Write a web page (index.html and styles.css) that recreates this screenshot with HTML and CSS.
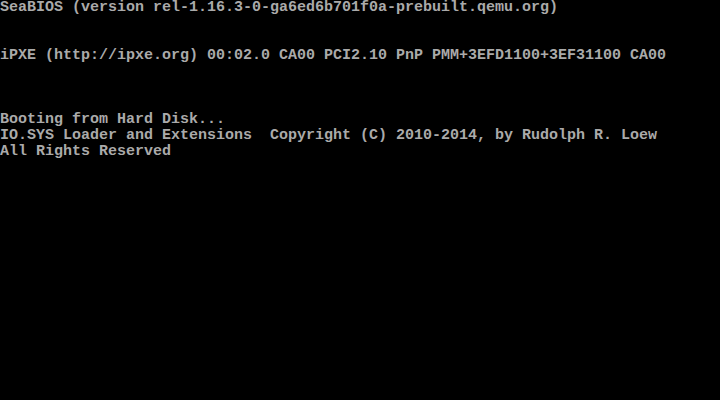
FILE: index.html
```html
<!DOCTYPE html>
<html>
<head>
<meta charset="utf-8">
<link rel="stylesheet" href="styles.css">
</head>
<body>
<pre class="screen">SeaBIOS (version rel-1.16.3-0-ga6ed6b701f0a-prebuilt.qemu.org)


iPXE (http://ipxe.org) 00:02.0 CA00 PCI2.10 PnP PMM+3EFD1100+3EF31100 CA00



Booting from Hard Disk...
IO.SYS Loader and Extensions  Copyright (C) 2010-2014, by Rudolph R. Loew
All Rights Reserved</pre>
</body>
</html>
```
FILE: styles.css
```css
html, body {
  margin: 0;
  padding: 0;
  background: #000;
  width: 720px;
  height: 400px;
  overflow: hidden;
}
.screen {
  margin: 0;
  padding: 0;
  font-family: "Liberation Mono", monospace;
  font-size: 15px;
  line-height: 16px;
  font-weight: bold;
  color: #aaaaaa;
  white-space: pre;
}
```
